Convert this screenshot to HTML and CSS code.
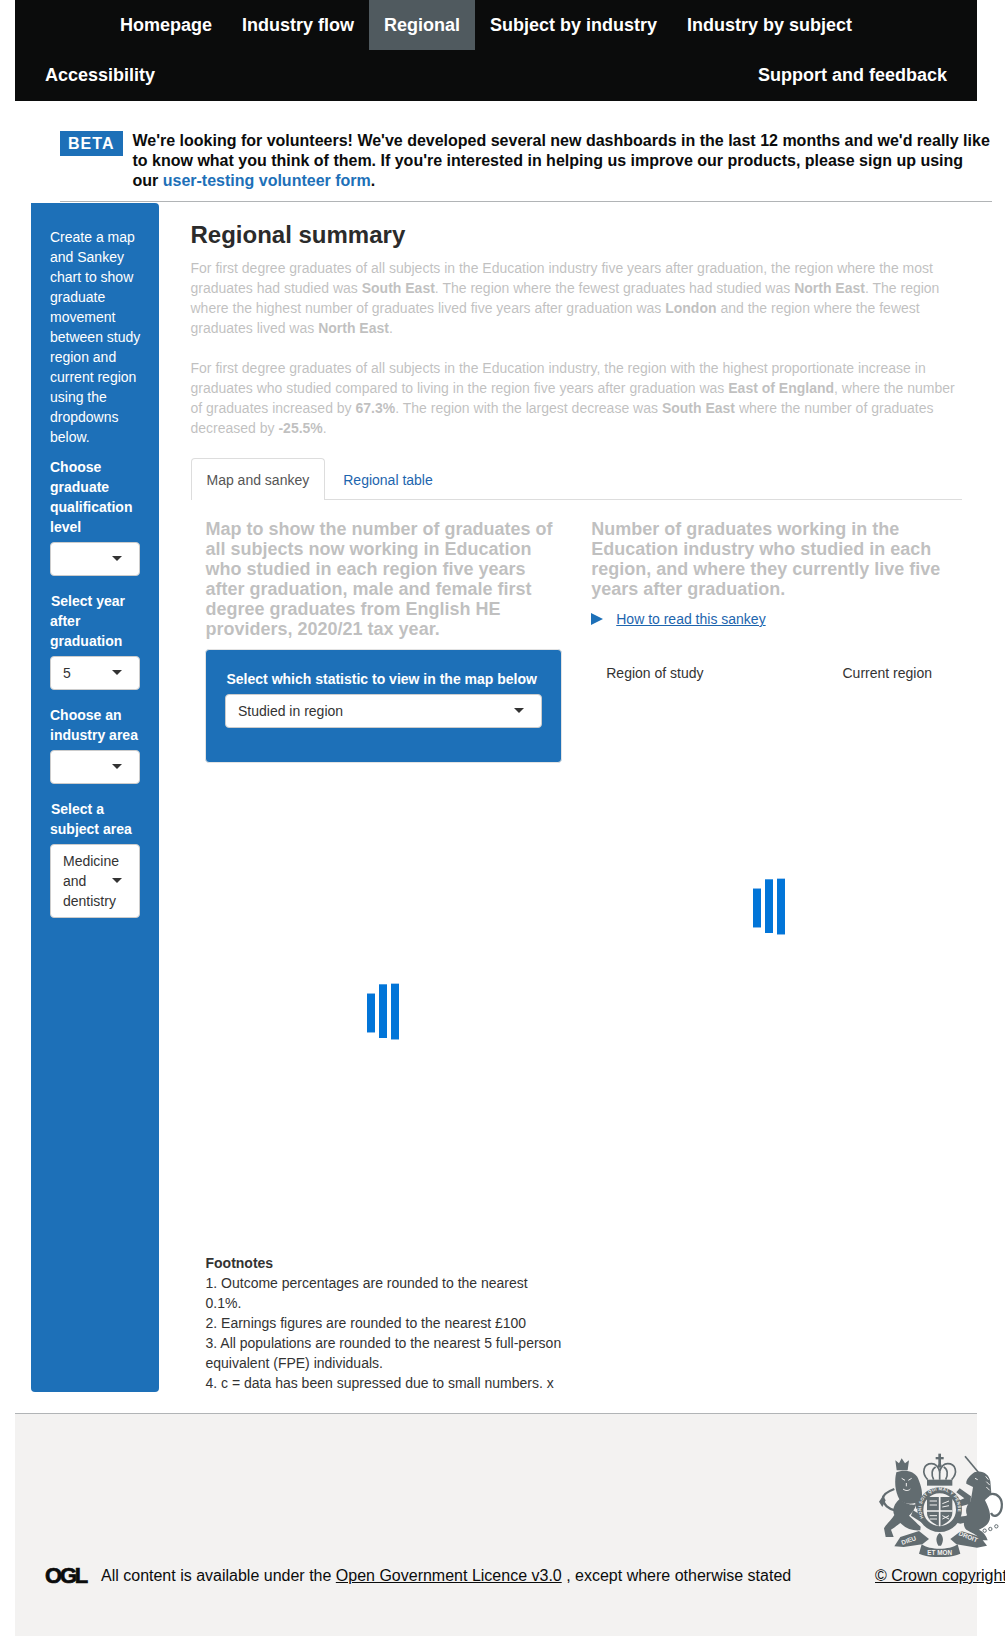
FILE: index.html
```html
<!DOCTYPE html>
<html lang="en">
<head>
<meta charset="utf-8">
<title>Regional summary</title>
<link rel="stylesheet" href="styles.css">
</head>
<body>
<div class="page">
  <nav class="nav">
    <ul class="nav-main">
      <li><a href="#">Homepage</a></li>
      <li><a href="#">Industry flow</a></li>
      <li class="active"><a href="#">Regional</a></li>
      <li><a href="#">Subject by industry</a></li>
      <li><a href="#">Industry by subject</a></li>
    </ul>
    <div class="nav-sub">
      <a href="#">Accessibility</a>
      <a href="#">Support and feedback</a>
    </div>
  </nav>

  <div class="beta">
    <strong class="beta-tag">BETA</strong>
    <p class="beta-text">We're looking for volunteers! We've developed several new dashboards in the last 12 months and we'd really like to know what you think of them. If you're interested in helping us improve our products, please sign up using our <a href="#">user-testing volunteer form</a>.</p>
  </div>

  <div class="content">
    <aside class="sidebar">
      <p class="side-intro">Create a map and Sankey chart to show graduate movement between study region and current region using the dropdowns below.</p>
      <div class="field">
        <label class="field-label">Choose graduate qualification level</label>
        <div class="select side-select"></div>
      </div>
      <div class="field">
        <label class="field-label nudge">Select year after graduation</label>
        <div class="select side-select">5</div>
      </div>
      <div class="field">
        <label class="field-label">Choose an industry area</label>
        <div class="select side-select"></div>
      </div>
      <div class="field">
        <label class="field-label nudge">Select a subject area</label>
        <div class="select side-select">Medicine and dentistry</div>
      </div>
    </aside>

    <main class="main">
      <h2 class="summary-title">Regional summary</h2>
      <div class="faded">
        <p class="summary">For first degree graduates of all subjects in the Education industry five years after graduation, the region where the most graduates had studied was <b>South East</b>. The region where the fewest graduates had studied was <b>North East</b>. The region where the highest number of graduates lived five years after graduation was <b>London</b> and the region where the fewest graduates lived was <b>North East</b>.</p>
        <p class="summary">For first degree graduates of all subjects in the Education industry, the region with the highest proportionate increase in graduates who studied compared to living in the region five years after graduation was <b>East of England</b>, where the number of graduates increased by <b>67.3%</b>. The region with the largest decrease was <b>South East</b> where the number of graduates decreased by <b>-25.5%</b>.</p>
      </div>

      <ul class="tabs">
        <li class="tab tab-active"><a href="#">Map and sankey</a></li>
        <li class="tab"><a href="#">Regional table</a></li>
      </ul>

      <div class="columns">
        <section class="col">
          <h3 class="col-title faded">Map to show the number of graduates of all subjects now working in Education who studied in each region five years after graduation, male and female first degree graduates from English HE providers, 2020/21 tax year.</h3>
          <div class="well">
            <label class="field-label">Select which statistic to view in the map below</label>
            <div class="select">Studied in region</div>
          </div>
          <div class="plot plot-map">
            <div class="loader"><span class="bar bar-a"></span><span class="bar bar-b"></span><span class="bar bar-c"></span></div>
          </div>
          <div class="footnotes">
            <strong>Footnotes</strong><br>
            1. Outcome percentages are rounded to the nearest 0.1%.<br>
            2. Earnings figures are rounded to the nearest £100<br>
            3. All populations are rounded to the nearest 5 full-person equivalent (FPE) individuals.<br>
            4. c = data has been supressed due to small numbers. x
          </div>
        </section>

        <section class="col">
          <h3 class="col-title faded">Number of graduates working in the Education industry who studied in each region, and where they currently live five years after graduation.</h3>
          <div class="howto"><span class="howto-arrow"></span><a href="#">How to read this sankey</a></div>
          <div class="sankey-heads"><span>Region of study</span><span>Current region</span></div>
          <div class="plot plot-sankey">
            <div class="loader"><span class="bar bar-a"></span><span class="bar bar-b"></span><span class="bar bar-c"></span></div>
          </div>
        </section>
      </div>
    </main>
  </div>

  <footer class="footer">
    <div class="licence">
      <span class="ogl">OGL</span>
      <span class="licence-text">All content is available under the <a href="#">Open Government Licence v3.0</a> , except where otherwise stated</span>
    </div>
    <div class="crown">
      <svg class="crest" viewBox="85 70 381 312" aria-hidden="true">
        <defs>
          <path id="garter" d="M222 264 A55 55 0 1 1 318 264"/>
        </defs>
        <!-- royal crown -->
        <g class="ink">
          <rect x="266" y="72" width="8" height="32"/>
          <rect x="258" y="82" width="24" height="7"/>
          <circle cx="270" cy="108" r="6"/>
          <rect x="232" y="150" width="76" height="18"/>
        </g>
        <path class="line-thin" d="M234 150C214 128 222 102 246 102C258 102 266 112 270 126C274 112 282 102 294 102C318 102 326 128 306 150"/>
        <path class="line-thin" d="M252 150C244 134 246 118 258 112M288 150C296 134 294 118 282 112M270 126V150"/>
        <!-- lion -->
        <path class="ink" d="M141 122L137 92L148 101L156 86L166 101L178 92L174 122Z"/>
        <path class="ink" d="M140 128C160 118 195 122 205 146C215 170 220 190 215 210C196 226 165 226 150 210C135 186 134 152 140 128Z"/>
        <path class="ink" d="M150 208C170 226 190 226 200 224C195 240 186 250 178 258C195 274 205 284 213 291L212 302C190 304 170 298 152 280C140 290 130 296 124 300L132 322L108 322L103 296C112 280 128 268 134 256C126 240 135 220 150 208Z"/>
        <path class="ink" d="M196 218L224 210L228 224L200 238Z"/>
        <path class="ink" d="M190 242L234 268L222 282L184 258Z"/>
        <path class="gap-thin" d="M156 146L166 152M186 146L176 152M170 160V170M160 178C168 184 176 184 182 178"/>
        <path class="line-thin tail" d="M136 242C118 238 100 226 100 206C100 192 118 184 134 178"/>
        <path class="ink" d="M88 216L100 198L108 212L98 232Z"/>
        <!-- unicorn -->
        <path class="line-thin" d="M346 80L386 128"/>
        <path class="ink" d="M374 128C396 120 418 132 422 155L425 190C424 198 412 204 406 212C414 228 425 250 420 270C416 285 402 294 388 300C400 306 410 318 414 332L396 332C386 318 368 310 350 300C338 288 342 270 352 256C346 244 350 226 362 216C366 200 368 184 370 172L350 162C348 152 360 138 374 128Z"/>
        <path class="ink" d="M364 200L330 176L320 188L344 206L320 216L326 232L362 222Z"/>
        <path class="ink" d="M352 258L322 262L316 278L332 282L356 276Z"/>
        <path class="gap-thin" d="M408 140L416 150M410 156L420 166M410 172L420 182M376 146L384 150"/>
        <path class="line-thin tail" d="M420 194C444 188 460 208 456 234C452 258 432 266 424 250"/>
        <g class="chain">
          <circle cx="395" cy="288" r="5"/>
          <circle cx="405" cy="303" r="5"/>
          <circle cx="422" cy="298" r="5"/>
          <circle cx="440" cy="290" r="5"/>
        </g>
        <!-- garter and shield -->
        <circle class="ring" cx="270" cy="240" r="58"/>
        <text class="crest-text"><textPath href="#garter">HONI SOIT QUI MAL Y PENSE</textPath></text>
        <path class="ink" d="M232 202H308V250C308 270 288 282 270 290C252 282 232 270 232 250Z"/>
        <path class="gap" d="M270 202V290M232 244H308"/>
        <path class="gap-thin" d="M240 214L262 214M240 226L262 226M278 222L298 214M278 232L298 228M240 258L262 258M240 268L262 268M278 258L298 268M298 258L278 268"/>
        <!-- motto -->
        <path class="ink" d="M134 350L152 322L208 304L238 328L218 344L162 352Z"/>
        <path class="ink" d="M216 344C240 362 300 362 324 344L332 372C300 386 240 386 208 372Z"/>
        <path class="ink" d="M302 328L334 304L392 322L412 348L382 354L320 344Z"/>
        <path class="ink" d="M270 310C280 318 284 332 274 348H266C256 332 260 318 270 310Z"/>
        <text class="motto" transform="translate(158 346) rotate(-20)">DIEU</text>
        <text class="motto" x="270" y="377" text-anchor="middle">ET MON</text>
        <text class="motto" transform="translate(326 316) rotate(22)">DROIT</text>
      </svg>
      <a class="crown-link" href="#">© Crown copyright</a>
    </div>
  </footer>
</div>
</body>
</html>
```

FILE: styles.css
```css
* {
  box-sizing: border-box;
}

html {
  overflow-x: hidden;
}

body {
  margin: 0;
  background: #fff;
  color: #333;
  font-family: "Liberation Sans", Arial, sans-serif;
  font-size: 14px;
  line-height: 20px;
}

p,
h2,
h3,
ul {
  margin: 0;
  padding: 0;
}

ul {
  list-style: none;
}

a {
  text-decoration: none;
}

.page {
  width: 962px;
  margin-left: 15px;
}

/* Navigation */
.nav {
  background: #0b0c0c;
  font-size: 18px;
  font-weight: 700;
}

.nav a {
  color: #fff;
}

.nav-main {
  display: flex;
  padding-left: 90px;
}

.nav-main li {
  height: 50px;
  padding: 15px;
}

.nav-main .active {
  background: #505a5f;
}

.nav-sub {
  display: flex;
  justify-content: space-between;
  height: 51px;
  padding: 15px 30px 0;
}

/* Beta banner */
.beta {
  display: flex;
  align-items: flex-start;
  gap: 10px;
  width: 932px;
  margin: 30px 0 0 45px;
  padding-bottom: 10px;
  border-bottom: 1px solid #b1b4b6;
  color: #0b0c0c;
  font-size: 16px;
  font-weight: 700;
}

.beta-tag {
  flex: none;
  width: 62.5px;
  height: 25px;
  background: #1d70b8;
  color: #fff;
  letter-spacing: 1px;
  line-height: 25px;
  text-align: center;
}

.beta-text a {
  color: #1d70b8;
}

/* Body columns */
.content {
  display: flex;
  margin: 1px 0 20px 16px;
}

.sidebar {
  flex: none;
  width: 128px;
  margin-bottom: 1px;
  padding: 24px 15px 0 19px;
  border-radius: 0 4px 4px 4px;
  background: #1d70b8;
  color: #fff;
}

.side-intro {
  margin-bottom: 10px;
}

.field {
  margin-bottom: 15px;
}

.field-label {
  display: block;
  margin-bottom: 5px;
  font-weight: 700;
}

.nudge {
  text-indent: 1px;
}

.select {
  position: relative;
  min-height: 34px;
  padding: 6px 12px;
  border: 1px solid #ccc;
  border-radius: 4px;
  background: #fff;
  color: #333;
}

.side-select {
  width: 90px;
}

.select::after {
  content: "";
  position: absolute;
  top: 50%;
  right: 17px;
  margin-top: -3px;
  border-top: 5px solid #333;
  border-right: 5px solid transparent;
  border-left: 5px solid transparent;
}

.main {
  flex: none;
  width: 771.5px;
  margin-left: 31.5px;
  padding-top: 19px;
}

.summary-title {
  margin-bottom: 10px;
  color: #2b2b2b;
  font-size: 24px;
  font-weight: 700;
  line-height: 26px;
}

.faded {
  opacity: 0.3;
}

.summary {
  margin-bottom: 20px;
}

.tabs {
  display: flex;
  gap: 2px;
  height: 42px;
  border-bottom: 1px solid #ddd;
}

.tab {
  height: 42px;
  padding: 11px 15px 10px;
  border: 1px solid transparent;
  border-bottom: 0;
}

.tab a {
  color: #1d65ae;
}

.tab-active {
  border-color: #ddd;
  border-radius: 4px 4px 0 0;
  background: #fff;
}

.tab-active a {
  color: #555;
}

.columns {
  display: flex;
}

.col {
  flex: 0 0 50%;
  padding: 19px 15px 0;
}

.col-title {
  color: #333;
  font-size: 18px;
  font-weight: 700;
  line-height: 20px;
}

.well {
  height: 114px;
  margin: 10px -0.5px 0;
  padding: 19px;
  border: 1px solid #e3e3e3;
  border-radius: 4px;
  background: #1d70b8;
  color: #fff;
}

.well .field-label {
  margin-left: 1.5px;
  white-space: nowrap;
}

.plot {
  display: flex;
  align-items: center;
  justify-content: center;
}

.plot-map {
  height: 490px;
  padding-top: 6px;
}

.plot-sankey {
  height: 446px;
}

.loader {
  display: flex;
  align-items: center;
  gap: 4px;
}

.bar {
  display: block;
  width: 8px;
  background: #0275d8;
}

.bar-a {
  height: 38px;
  margin-top: 4px;
  box-shadow: 0 -1px 0 #8bbcea, 0 1px 0 #8bbcea;
}

.bar-b {
  height: 53px;
  box-shadow: 0 -1px 0 #4d9ee3;
}

.bar-c {
  height: 55px;
  box-shadow: 0 -1px 0 #a9cdef, 0 1px 0 #8bbcea;
}

.footnotes {
  color: #333;
}

.howto {
  display: flex;
  align-items: center;
  gap: 13px;
  margin-top: 10px;
}

.howto-arrow {
  width: 0;
  height: 0;
  border-top: 6px solid transparent;
  border-bottom: 6px solid transparent;
  border-left: 12px solid #1d70b8;
}

.howto a {
  color: #1d65ae;
  text-decoration: underline;
}

.sankey-heads {
  display: flex;
  justify-content: space-between;
  margin-top: 34px;
  padding: 0 15px;
}

/* Footer */
.footer {
  display: flex;
  align-items: flex-end;
  padding: 39px 0 50px 30px;
  border-top: 1px solid #b1b4b6;
  background: #f3f2f1;
  color: #0b0c0c;
  font-size: 16px;
}

.footer a {
  color: #0b0c0c;
  text-decoration: underline;
}

.licence {
  display: flex;
  flex: 0 0 830px;
  align-items: center;
  gap: 15px;
}

.ogl {
  flex: none;
  width: 41px;
  color: #0b0c0c;
  font-size: 22px;
  font-weight: 700;
  letter-spacing: -2.2px;
  -webkit-text-stroke: 0.7px #0b0c0c;
}

.crown {
  flex: 0 0 132px;
  white-space: nowrap;
}

.crest {
  display: block;
  width: 127px;
  height: 104px;
  margin: 0 0 9px 3px;
}

.ink {
  fill: #626c70;
}

.line-thin {
  fill: none;
  stroke: #626c70;
  stroke-width: 5;
}

.tail {
  stroke-width: 7;
}

.chain {
  fill: none;
  stroke: #626c70;
  stroke-width: 3;
}

.ring {
  fill: #f3f2f1;
  stroke: #626c70;
  stroke-width: 18;
}

.gap {
  fill: none;
  stroke: #f3f2f1;
  stroke-width: 5;
}

.gap-thin {
  fill: none;
  stroke: #f3f2f1;
  stroke-width: 3;
}

.crest-text {
  fill: #f3f2f1;
  font-size: 13px;
  font-weight: 700;
  letter-spacing: 1px;
}

.motto {
  fill: #f3f2f1;
  font-size: 19px;
  font-weight: 700;
}
```
